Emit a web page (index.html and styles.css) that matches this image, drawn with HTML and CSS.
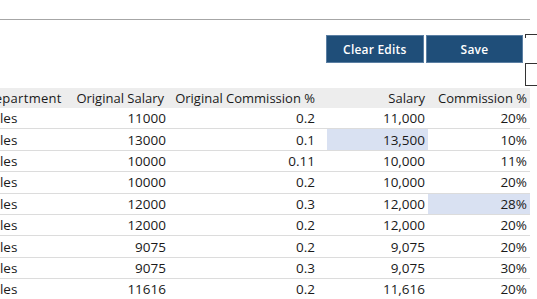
FILE: index.html
```html
<!DOCTYPE html>
<html lang="en">
<head>
    <meta charset="UTF-8">
    <title>Commission Edits</title>
    <link rel="stylesheet" href="styles.css">
</head>
<body>
    <div class="page">
        <div class="title-bar"></div>

        <div class="toolbar">
            <button class="btn">Clear Edits</button>
            <button class="btn">Save</button>
            <div class="side">
                <div class="side-box side-top"></div>
                <div class="side-box side-input"></div>
            </div>
        </div>

        <div class="grid-wrap">
            <table class="grid">
                <colgroup>
                    <col class="c-dept">
                    <col class="c-orig-sal">
                    <col class="c-orig-com">
                    <col class="c-sal">
                    <col class="c-com">
                </colgroup>
                <thead>
                    <tr>
                        <th class="left">Department</th>
                        <th class="pad-sal">Original Salary</th>
                        <th class="pad-com">Original Commission %</th>
                        <th>Salary</th>
                        <th>Commission %</th>
                    </tr>
                </thead>
                <tbody id="rows"></tbody>
            </table>
        </div>
    </div>

    <script>
        // données du tableau
        var rows = [
            [11000, 0.2, '11,000', '20%', ''],
            [13000, 0.1, '13,500', '10%', 'sal'],
            [10000, 0.11, '10,000', '11%', ''],
            [10000, 0.2, '10,000', '20%', ''],
            [12000, 0.3, '12,000', '28%', 'com'],
            [12000, 0.2, '12,000', '20%', ''],
            [9075, 0.2, '9,075', '20%', ''],
            [9075, 0.3, '9,075', '30%', ''],
            [11616, 0.2, '11,616', '20%', '']
        ];

        var html = '';
        rows.forEach(function(r) {
            html += `
                <tr>
                    <td class="left">Sales</td>
                    <td>${r[0]}</td>
                    <td class="pad-com">${r[1]}</td>
                    <td class="${r[4] === 'sal' ? 'edited' : ''}">${r[2]}</td>
                    <td class="${r[4] === 'com' ? 'edited' : ''}">${r[3]}</td>
                </tr>`;
        });
        document.getElementById('rows').innerHTML = html;
    </script>
</body>
</html>
```

FILE: styles.css
```css
body {
    margin: 0;
    font-family: "Open Sans", "Noto Sans", sans-serif;
    background: white;
    color: #1a1a1a;
}
.page {
    width: 537px;
    height: 299px;
    overflow: hidden;
}
.title-bar {
    width: 530px;
    height: 19px;
    border-bottom: 1px solid #a6a6a6;
}
.toolbar {
    display: flex;
    align-items: flex-start;
    padding: 15px 0 0 326px;
    height: 53px;
}
.btn {
    width: 100px;
    height: 28px;
    margin-right: 2px;
    background-color: #1f4e79;
    color: white;
    border: 1px solid #5b7fa3;
    font-family: inherit;
    font-size: 12px;
    font-weight: 600;
    letter-spacing: 0.2px;
    padding: 0;
}
.side {
    display: flex;
    flex-direction: column;
    width: 12px;
}
.side-box {
    border: 1px solid #333;
    border-right: none;
    box-sizing: border-box;
}
.side-top {
    height: 4px;
    margin-top: -1px;
    border-bottom: none;
}
.side-input {
    height: 23px;
    margin-top: 25px;
}
.grid-wrap {
    margin-left: -22px;
}
.grid {
    width: 552px;
    table-layout: fixed;
    border-collapse: collapse;
    font-size: 13.5px;
}
.c-dept { width: 88px; }
.c-orig-sal { width: 103px; }
.c-orig-com { width: 158px; }
.c-sal { width: 101px; }
.c-com { width: 102px; }
.grid th {
    background-color: #ededed;
    font-weight: normal;
    font-size: 13px;
    height: 20px;
    padding: 0 3px 0 0;
    text-align: right;
    white-space: nowrap;
}
.grid td {
    height: 20.4px;
    padding: 0 3px 0 0;
    text-align: right;
    border-bottom: 1px solid #dcdcdc;
    white-space: nowrap;
}
.grid .left {
    text-align: left;
    padding-left: 7px;
}
.grid th.left {
    letter-spacing: 0.3px;
}
.grid .pad-sal {
    padding-right: 5px;
}
.grid .pad-com {
    padding-right: 12px;
}
.grid td.edited {
    background-color: #d9e1f2;
}
```
